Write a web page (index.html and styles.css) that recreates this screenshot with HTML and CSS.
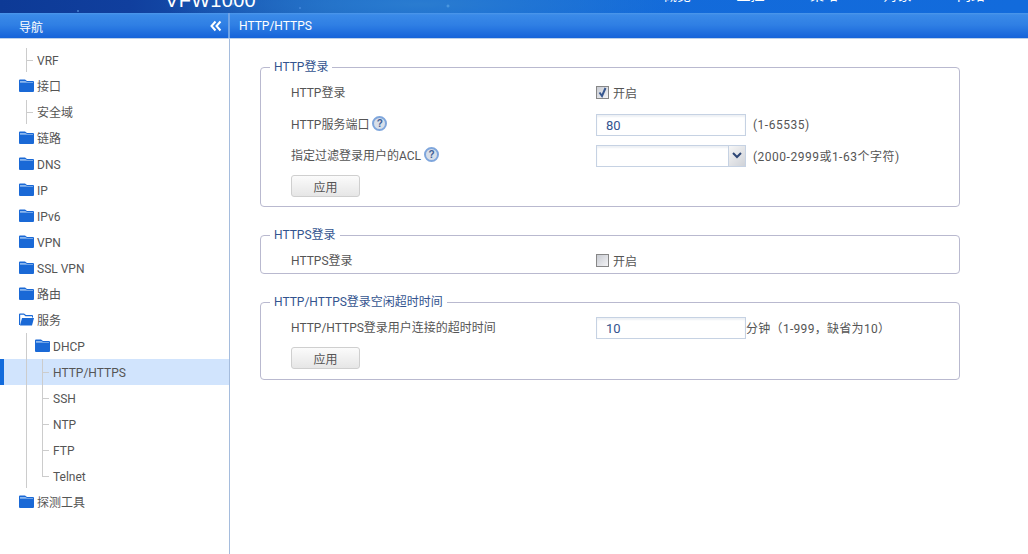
FILE: index.html
```html
<!DOCTYPE html>
<html lang="zh-CN">
<head>
<meta charset="utf-8">
<title>HTTP/HTTPS</title>
<link rel="stylesheet" href="styles.css">
</head>
<body>
<header class="banner">
  <div class="brand">VFW1000</div>
  <nav class="topnav">
    <span class="topnav-item">概览</span>
    <span class="topnav-item">监控</span>
    <span class="topnav-item">策略</span>
    <span class="topnav-item">对象</span>
    <span class="topnav-item">网络</span>
  </nav>
</header>
<div class="titlebar">
  <div class="titlebar-nav">
    <span>导航</span>
    <svg class="collapse" width="12" height="12" viewBox="0 0 12 12"><path d="M5.5 1.5 1.5 6l4 4.500M10.500 1.500 6.500 6l4 4.500" fill="none" stroke="#fff" stroke-width="2"/></svg>
  </div>
  <div class="titlebar-page">HTTP/HTTPS</div>
</div>
<div class="main">
  <aside class="sidebar">
    <div class="node leaf top last-short">VRF</div>
    <div class="node folder"><svg class="ficon" viewBox="0 0 15 13"><use href="#closed"/></svg>接口</div>
    <div class="node leaf top last-short">安全域</div>
    <div class="node folder"><svg class="ficon" viewBox="0 0 15 13"><use href="#closed"/></svg>链路</div>
    <div class="node folder"><svg class="ficon" viewBox="0 0 15 13"><use href="#closed"/></svg>DNS</div>
    <div class="node folder"><svg class="ficon" viewBox="0 0 15 13"><use href="#closed"/></svg>IP</div>
    <div class="node folder"><svg class="ficon" viewBox="0 0 15 13"><use href="#closed"/></svg>IPv6</div>
    <div class="node folder"><svg class="ficon" viewBox="0 0 15 13"><use href="#closed"/></svg>VPN</div>
    <div class="node folder"><svg class="ficon" viewBox="0 0 15 13"><use href="#closed"/></svg>SSL VPN</div>
    <div class="node folder"><svg class="ficon" viewBox="0 0 15 13"><use href="#closed"/></svg>路由</div>
    <div class="node folder"><svg class="ficon" viewBox="0 0 15 13"><use href="#open"/></svg>服务</div>
    <div class="group">
      <div class="node folder sub"><svg class="ficon" viewBox="0 0 15 13"><use href="#closed"/></svg>DHCP</div>
      <div class="node leaf second active">HTTP/HTTPS</div>
      <div class="node leaf second">SSH</div>
      <div class="node leaf second">NTP</div>
      <div class="node leaf second">FTP</div>
      <div class="node leaf second end">Telnet</div>
    </div>
    <div class="node folder"><svg class="ficon" viewBox="0 0 15 13"><use href="#closed"/></svg>探测工具</div>
  </aside>
  <main class="content">
    <fieldset class="panel panel-http">
      <legend>HTTP登录</legend>
      <div class="row">
        <div class="label plain">HTTP登录</div>
        <label class="check"><span class="box"><svg width="11" height="11" viewBox="0 0 11 11"><path d="M2.500 5.500 5 9l3.500-8" fill="none" stroke="#37578f" stroke-width="2"/></svg></span>开启</label>
      </div>
      <div class="row">
        <div class="label">HTTP服务端口<span class="help">?</span></div>
        <div class="input">80</div><span class="hint">(1-65535)</span>
      </div>
      <div class="row">
        <div class="label">指定过滤登录用户的ACL<span class="help">?</span></div>
        <div class="input select"><span class="arrow"><svg width="10" height="7" viewBox="0 0 10 7"><path d="M1 1 5 5 9 1" fill="none" stroke="#2d4675" stroke-width="2"/></svg></span></div><span class="hint">(2000-2999或1-63个字符)</span>
      </div>
      <button class="btn" type="button">应用</button>
    </fieldset>
    <fieldset class="panel panel-https">
      <legend>HTTPS登录</legend>
      <div class="row">
        <div class="label">HTTPS登录</div>
        <label class="check"><span class="box"></span>开启</label>
      </div>
    </fieldset>
    <fieldset class="panel panel-idle">
      <legend>HTTP/HTTPS登录空闲超时时间</legend>
      <div class="row">
        <div class="label">HTTP/HTTPS登录用户连接的超时时间</div>
        <div class="input">10</div><span class="hint tight">分钟（1-999，缺省为10）</span>
      </div>
      <button class="btn" type="button">应用</button>
    </fieldset>
  </main>
</div>
<svg class="defs" width="0" height="0">
  <defs>
    <symbol id="closed" viewBox="0 0 15 13">
      <path d="M0 1.500Q0 .5 1 .5H6L8 2H14Q15 2 15 3V12Q15 13 14 13H1Q0 13 0 12Z" fill="#1a69d6"/>
      <path d="M1 2H6.500L8 3H14V3.700H1Z" fill="#8db8ee"/>
    </symbol>
    <symbol id="open" viewBox="0 0 15 13">
      <path d="M0 12V1.500Q0 .5 1 .5H5L7 2H13Q14 2 14 3V4.500H13V3.200H6.500L4.800 1.700H1.200V12Z" fill="#1a69d6"/>
      <path d="M1 12.500 3 5H15L13 12.500Z" fill="#1a69d6"/>
    </symbol>
  </defs>
</svg>
</body>
</html>
```
FILE: styles.css
```css
* { box-sizing: border-box; }
html, body { height: 100%; }
body {
  margin: 0;
  height: 554px;
  overflow: hidden;
  display: flex;
  flex-direction: column;
  background: #fff;
  color: #555;
  font: 12px Roboto, "Noto Sans CJK SC", sans-serif;
}
.defs { display: block; height: 0; }

.banner {
  flex: 0 0 13px;
  height: 13px;
  overflow: hidden;
  display: flex;
  color: #fff;
  background:
    radial-gradient(circle at 78px 11px, #5f9fe8 0, transparent 1.5px),
    radial-gradient(circle at 233px 4px, #4f93e6 0, transparent 2px),
    radial-gradient(circle at 300px 8px, #4f93e6 0, transparent 1.5px),
    radial-gradient(circle at 448px 6px, #5ca6e8 0, transparent 2px),
    radial-gradient(ellipse 260px 30px at 420px 4px, #2a7cd0 0, transparent 100%),
    linear-gradient(90deg, #0d3a96 0, #103f9e 130px, #1b63bd 330px, #136ad9 480px, #126bdc 100%);
}
.brand {
  margin: -13px 0 0 165px;
  font: 20px/26px "Liberation Sans", sans-serif;
  letter-spacing: .3px;
}
.topnav {
  margin-left: auto;
  margin-right: 43px;
  display: flex;
  gap: 45.5px;
  margin-top: -14px;
  line-height: 18px;
}
.topnav-item { width: 28px; font-size: 14px; }

.titlebar {
  flex: 0 0 26px;
  height: 26px;
  display: flex;
  color: #fff;
  background: linear-gradient(180deg, #4d97ea 0, #3a8ae8 2px, #2f7fe4 12px, #1765da 24px, #1664d8 100%);
  border-bottom: 1px solid #bcd0ea;
}
.titlebar-nav {
  width: 230px;
  padding: 1px 6px 0 19px;
  display: flex;
  align-items: center;
  justify-content: space-between;
  border-right: 2px solid #6fa3e6;
}
.titlebar-page { padding: 1px 0 0 9px; line-height: 24px; }
.collapse { display: block; }

.main { flex: 1; display: flex; min-height: 0; }
.sidebar {
  width: 230px;
  padding-top: 8px;
  border-right: 1px solid #a5bcdd;
}
.node {
  position: relative;
  height: 26px;
  line-height: 24px;
  padding-top: 2px;
  padding-left: 37px;
  display: flex;
  align-items: center;
}
.ficon {
  position: absolute;
  left: 19px;
  top: 6px;
  width: 15px;
  height: 13px;
}
.folder.sub { padding-left: 53px; }
.folder.sub .ficon { left: 35px; }
.top::before {
  content: "";
  position: absolute;
  left: 26px;
  top: 1px;
  bottom: 1px;
  width: 1px;
  background: #ccc;
}
.top::after, .second::after {
  content: "";
  position: absolute;
  left: 27px;
  top: 13px;
  width: 6px;
  height: 1px;
  background: #ccc;
}
.group { position: relative; }
.group::before {
  content: "";
  position: absolute;
  left: 26px;
  top: 0;
  bottom: 1px;
  width: 1px;
  background: #ccc;
  z-index: 1;
}
.second { padding-left: 53px; }
.second::before {
  content: "";
  position: absolute;
  left: 42px;
  top: 0;
  bottom: 0;
  width: 1px;
  background: #ccc;
}
.second::after { left: 43px; }
.second.end::before { bottom: 12px; }
.active {
  background: #d1e4fd;
  box-shadow: inset 4px 0 0 #126bdc;
}

.content { flex: 1; padding: 18px 68px 0 30px; min-width: 0; }
.panel {
  margin: 0;
  padding: 0;
  width: 700px;
  border: 1px solid #b9b9cf;
  border-radius: 4px;
}
.panel legend {
  margin-left: 9px;
  padding: 1px 4px 0;
  line-height: 19px;
  color: #33548f;
}
.panel-http { height: 150px; }
.panel-https { height: 49px; margin-top: 18px; }
.panel-idle { height: 88px; margin-top: 18px; }
.row {
  height: 31px;
  margin-left: 30px;
  display: flex;
  align-items: center;
}
.panel-https .row, .panel-idle .row { height: 29px; }
.label {
  width: 305px;
  display: flex;
  align-items: center;
}
.label.plain { margin-top: -2px; }
.help {
  width: 15px;
  height: 15px;
  margin-left: 3px;
  border: 2px solid #7fa6dc;
  border-radius: 50%;
  background: #d8dfe9;
  color: #3f5f96;
  font: bold 10px/11px "Liberation Sans", sans-serif;
  text-align: center;
}
.check { display: flex; align-items: center; }
.panel-https .check { margin-top: 2px; }
.box {
  width: 13px;
  height: 13px;
  margin-right: 4px;
  border: 1px solid #878787;
  background: linear-gradient(135deg, #c8cbd2, #f4f4f6);
  display: flex;
}
.input {
  position: relative;
  width: 150px;
  height: 22px;
  margin-top: 2px;
  padding-left: 9px;
  line-height: 21px;
  border: 1px solid #c6d2e3;
  box-shadow: inset 0 2px 2px #eef1f5;
  color: #33548f;
  font-size: 13px;
  background: #fff;
}
.select { padding: 0; }
.arrow {
  position: absolute;
  right: 0;
  top: 0;
  bottom: 0;
  width: 17px;
  background: linear-gradient(135deg, #f6f6f6, #cfd2d8);
  border-left: 1px solid #c6d2e3;
  display: flex;
  align-items: center;
  justify-content: center;
}
.hint { margin-left: 7px; margin-top: 2px; letter-spacing: .5px; }
.hint.tight { margin-left: 0; letter-spacing: .3px; }
.btn {
  display: block;
  width: 69px;
  height: 22px;
  margin: 5px 0 0 30px;
  padding: 0;
  border: 1px solid #cfcfcf;
  border-radius: 3px;
  background: linear-gradient(180deg, #fbfbfb, #e6e6e6);
  color: #555;
  font: inherit;
}
.panel-idle .btn { margin-top: 6px; }
```
